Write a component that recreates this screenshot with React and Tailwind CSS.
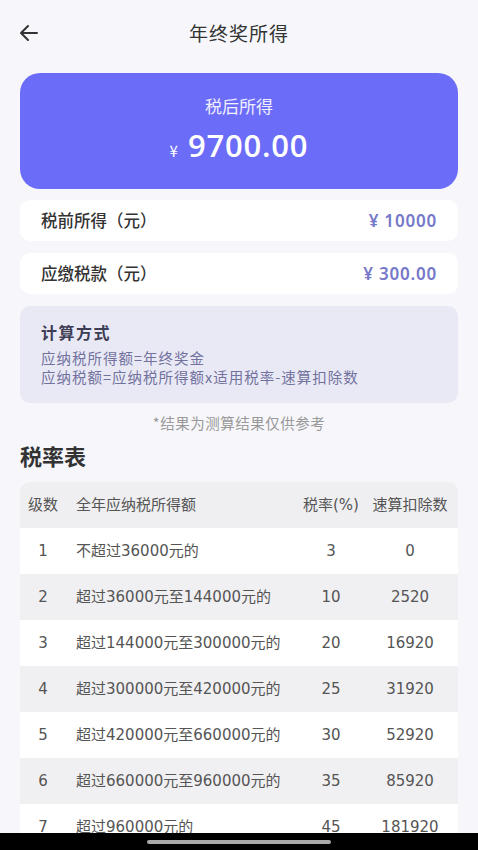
import React from "react";

const rows = [
  ["1", "不超过36000元的", "3", "0"],
  ["2", "超过36000元至144000元的", "10", "2520"],
  ["3", "超过144000元至300000元的", "20", "16920"],
  ["4", "超过300000元至420000元的", "25", "31920"],
  ["5", "超过420000元至660000元的", "30", "52920"],
  ["6", "超过660000元至960000元的", "35", "85920"],
  ["7", "超过960000元的", "45", "181920"],
];

const font = { fontFamily: '"DejaVu Sans", "Noto Sans CJK SC", sans-serif' };
const cjk = { fontFamily: '"Noto Sans CJK SC", "Noto Sans", sans-serif' };
const num = { fontFamily: '"Noto Sans", "Noto Sans CJK SC", sans-serif' };

export default function App() {
  return (
    <div className="relative w-[478px] h-[850px] overflow-hidden bg-[#f7f7fb] text-[#333]" style={cjk}>
      {/* header */}
      <div className="relative h-[66px] flex items-center justify-center">
        <svg className="absolute left-[19px] top-[24px]" width="20" height="18" viewBox="0 0 20 18" fill="none" stroke="#333" strokeWidth="2" strokeLinecap="round" strokeLinejoin="round">
          <path d="M18 9H2M9 2L2 9l7 7" />
        </svg>
        <span className="text-[19px] tracking-[1px] text-[#333]">年终奖所得</span>
      </div>

      <div className="px-[20px] flex flex-col">
        {/* purple card */}
        <div className="mt-[7px] h-[116px] rounded-[20px] bg-[#6b6cf7] flex flex-col items-center justify-center text-white">
          <div className="text-[17px] text-white/90 leading-none -mt-[4px]">税后所得</div>
          <div className="mt-[16px] flex items-baseline leading-none">
            <span className="text-[15px] mr-[10px]">¥</span>
            <span className="text-[31px] font-semibold tracking-[0.8px]" style={{ fontFamily: '"Open Sans", "Noto Sans", sans-serif' }}>9700.00</span>
          </div>
        </div>

        {/* rows */}
        <div className="mt-[11px] h-[41px] rounded-[10px] bg-white flex items-center justify-between px-[21px]">
          <span className="text-[16.5px] font-medium text-[#333]">税前所得（元）</span>
          <span className="text-[17px] font-semibold tracking-[0.8px] text-[#7678c9]" style={num}>¥ 10000</span>
        </div>
        <div className="mt-[12px] h-[41px] rounded-[10px] bg-white flex items-center justify-between px-[21px]">
          <span className="text-[16.5px] font-medium text-[#333]">应缴税款（元）</span>
          <span className="text-[17px] font-semibold tracking-[0.8px] text-[#7678c9]" style={num}>¥ 300.00</span>
        </div>

        {/* calc box */}
        <div className="mt-[12px] h-[97px] rounded-[10px] bg-[#e9e9f5] px-[21px] pt-[15px]">
          <div className="text-[16px] tracking-[1.5px] font-bold text-[#3d3d55] leading-[22px]">计算方式</div>
          <div className="mt-[5px] text-[14.5px] tracking-[1px] text-[#72729e] leading-[19px]">应纳税所得额=年终奖金</div>
          <div className="text-[14.5px] tracking-[1px] text-[#72729e] leading-[19px]">应纳税额=应纳税所得额x适用税率-速算扣除数</div>
        </div>

        <div className="mt-[11px] text-center text-[14.5px] tracking-[0.5px] text-[#999] leading-[18px]">*结果为测算结果仅供参考</div>

        <div className="mt-[10px] text-[22px] font-bold text-[#333] leading-[26px]">税率表</div>

        {/* table */}
        <div className="mt-[14px] rounded-t-[10px] overflow-hidden" style={font}>
          <div className="grid grid-cols-[46px_1fr_62px_96px] h-[46px] items-center bg-[#efeff1] text-[15px] text-[#555]">
            <span className="text-center">级数</span>
            <span className="pl-[10px]">全年应纳税所得额</span>
            <span className="text-center">税率(%)</span>
            <span className="text-center">速算扣除数</span>
          </div>
          {rows.map((r, i) => (
            <div key={i} className={`grid grid-cols-[46px_1fr_62px_96px] h-[46px] items-center text-[15px] text-[#555] ${i % 2 === 0 ? "bg-white" : "bg-[#f0f0f2]"}`}>
              <span className="text-center">{r[0]}</span>
              <span className="pl-[10px]">{r[1]}</span>
              <span className="text-center">{r[2]}</span>
              <span className="text-center">{r[3]}</span>
            </div>
          ))}
        </div>
      </div>

      {/* bottom bar */}
      <div className="absolute left-0 right-0 bottom-0 h-[17px] bg-black flex justify-center pt-[7px]">
        <div className="w-[184px] h-[4px] rounded-full bg-[#a8a8a8]" />
      </div>
    </div>
  );
}
